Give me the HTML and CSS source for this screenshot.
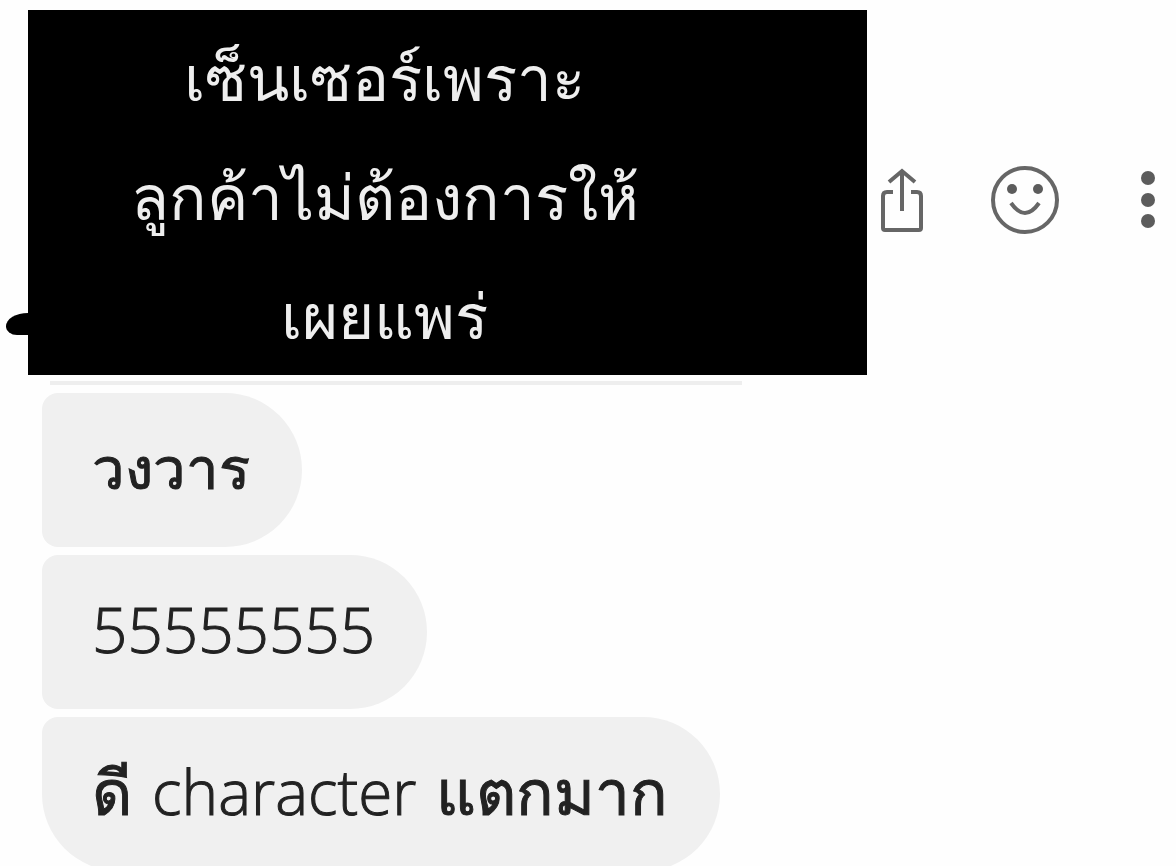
FILE: index.html
```html
<!DOCTYPE html>
<html lang="th">
<head>
  <meta charset="UTF-8">
  <meta name="viewport" content="width=device-width, initial-scale=1">
  <title>Chat</title>
  <link rel="stylesheet" href="styles.css">
</head>
<body>

  <main class="chat">
    <div class="message-row">
      <div class="avatar-edge"></div>
      <div class="censored">
        <p>เซ็นเซอร์เพราะ<br>ลูกค้าไม่ต้องการให้<br>เผยแพร่</p>
      </div>
      <div class="actions">
        <button type="button" aria-label="Share">
          <svg width="44" height="66" viewBox="0 0 44 66">
            <path d="M13 25H7Q3 25 3 29V61Q3 63 5 63H39Q41 63 41 61V29Q41 25 37 25H31M22 44V4M9 15L22 4L35 15"/>
          </svg>
        </button>
        <button type="button" aria-label="React">
          <svg width="70" height="70" viewBox="0 0 70 70">
            <circle cx="35" cy="35" r="32"/>
            <path d="M21 38Q35 58 49 38"/>
            <circle class="dot" cx="22" cy="24" r="5"/>
            <circle class="dot" cx="48" cy="24" r="5"/>
          </svg>
        </button>
        <button type="button" aria-label="More">
          <svg width="30" height="60" viewBox="0 0 30 60">
            <circle class="dot" cx="22" cy="8" r="7"/>
            <circle class="dot" cx="22" cy="30" r="7"/>
            <circle class="dot" cx="22" cy="51" r="7"/>
          </svg>
        </button>
      </div>
    </div>

    <div class="bubbles">
      <div class="bubble-edge"></div>
      <p class="bubble small">วงวาร</p>
      <p class="bubble">55555555</p>
      <p class="bubble last">ดี <span class="word">character</span> แตกมาก</p>
    </div>
  </main>

</body>
</html>
```
FILE: styles.css
```css
* {
  box-sizing: border-box;
}

body {
  margin: 0;
  background: #fefefe;
  color: #222;
  font-family: "Open Sans", "Noto Sans", sans-serif;
  overflow: hidden;
}

p {
  margin: 0;
}

.chat {
  padding-top: 10px;
}

.message-row {
  display: flex;
  align-items: center;
}

.avatar-edge {
  align-self: flex-end;
  width: 22px;
  height: 22px;
  margin: 0 0 40px 6px;
  background: #000;
  border-radius: 100% 0 0 50% / 60% 0 0 40%;
}

.censored {
  flex: 0 1 839px;
  padding: 8px 126px 0 0;
  background: #000;
  color: #eee;
  font-size: 62px;
  line-height: 119px;
  text-align: center;
  white-space: nowrap;
}

.actions {
  flex: 1;
  display: flex;
  align-items: center;
  justify-content: space-between;
  padding: 14px 20px 0 13px;
}

.actions button {
  display: flex;
  padding: 0;
  border: 0;
  background: none;
}

.actions svg {
  fill: none;
  stroke: #666;
  stroke-width: 4;
}

.actions .dot {
  fill: #5c5c5c;
  stroke: none;
}

.bubbles {
  display: flex;
  flex-direction: column;
  align-items: flex-start;
  gap: 8px;
  padding-left: 42px;
}

.bubble-edge {
  width: 692px;
  height: 4px;
  margin: 6px 0 0 8px;
  background: #eee;
}

.bubble {
  padding: 29px 52px 35px 50px;
  background: #f0f0f0;
  border-radius: 16px 77px 77px 16px;
  font-size: 62px;
  font-weight: 300;
  line-height: 90px;
  white-space: nowrap;
  -webkit-text-stroke: 1px #222;
}

.small {
  font-size: 58px;
}

.word {
  margin: 0 4px;
}

.last {
  border-radius: 16px 77px 77px 77px;
}
```
